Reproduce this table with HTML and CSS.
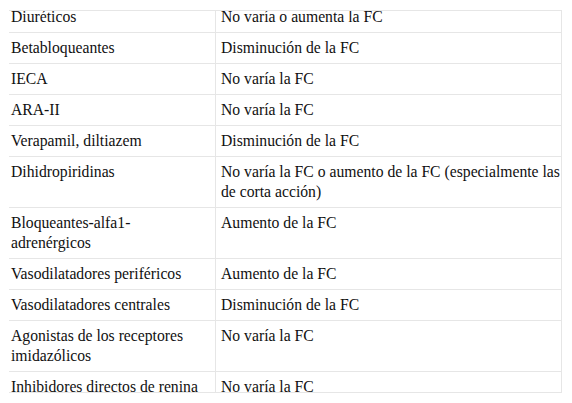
FILE: index.html
```html
<!DOCTYPE html>
<html>
<head>
<meta charset="utf-8">
<link rel="stylesheet" href="styles.css">
</head>
<body>
<div class="clip">
<table class="tbl">
<colgroup><col class="c1"><col class="c2"></colgroup>
<tbody>
<tr><td>Diuréticos</td><td>No varía o aumenta la FC</td></tr>
<tr><td>Betabloqueantes</td><td>Disminución de la FC</td></tr>
<tr><td>IECA</td><td>No varía la FC</td></tr>
<tr><td>ARA-II</td><td>No varía la FC</td></tr>
<tr><td>Verapamil, diltiazem</td><td>Disminución de la FC</td></tr>
<tr><td>Dihidropiridinas</td><td>No varía la FC o aumento de la FC (especialmente las de corta acción)</td></tr>
<tr><td>Bloqueantes-alfa1-adrenérgicos</td><td>Aumento de la FC</td></tr>
<tr><td>Vasodilatadores periféricos</td><td>Aumento de la FC</td></tr>
<tr><td>Vasodilatadores centrales</td><td>Disminución de la FC</td></tr>
<tr><td>Agonistas de los receptores imidazólicos</td><td>No varía la FC</td></tr>
<tr><td>Inhibidores directos de renina</td><td>No varía la FC</td></tr>
</tbody>
</table>
</div>
</body>
</html>
```

FILE: styles.css
```css
html, body {
  margin: 0;
  padding: 0;
  background: #fff;
}
.clip {
  margin: 10px 0 0 9px;
  width: 553px;
  height: 381px;
  border-top: 1px solid #e6e6e6;
  border-bottom: 1px solid #e6e6e6;
  overflow: hidden;
}
.tbl {
  margin-top: -9px;
  border-collapse: separate;
  border-spacing: 0;
  table-layout: fixed;
  width: 553px;
  font-family: "Liberation Serif", "Times New Roman", serif;
  font-size: 15.7px;
  line-height: 20px;
  color: #111;
}
.c1 { width: 207px; }
.c2 { width: 346px; }
.tbl td {
  vertical-align: top;
  padding: 5px 0 5px 5px;
  border-bottom: 1px solid #e6e6e6;
  border-right: 1px solid #e6e6e6;
}
.tbl td:first-child {
  padding-left: 2px;
  padding-right: 10px;
}
```
